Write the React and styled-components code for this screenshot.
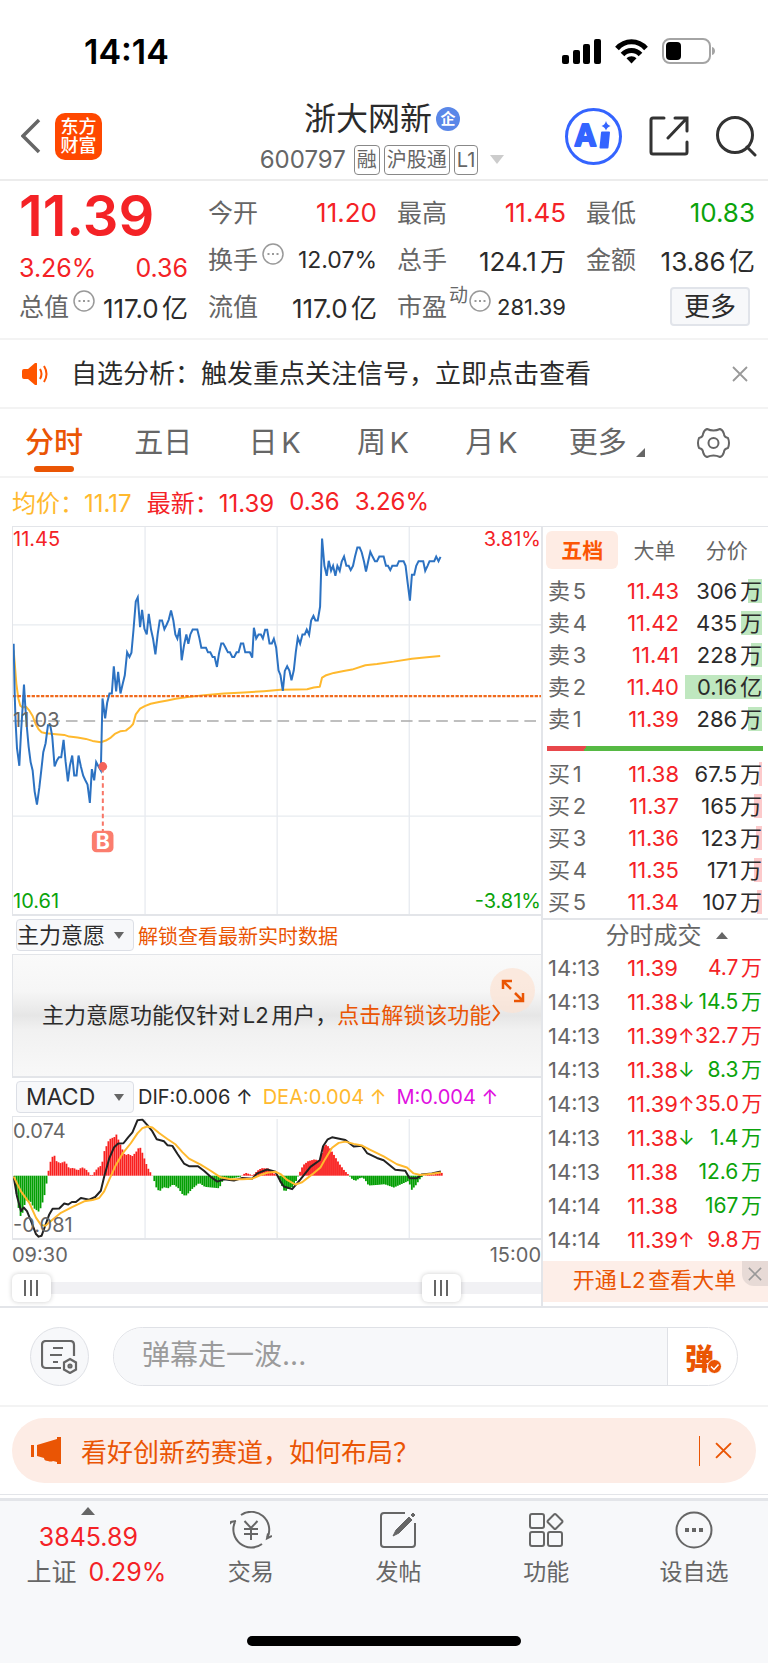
import React from 'react';
import styled, { createGlobalStyle } from 'styled-components';

const RED = '#f42226';
const GREEN = '#0ba30b';
const ORANGE = '#ea5504';
const YELLOW = '#ffb92e';
const GRAY = '#666';
const INK = '#2b2b2b';
const LINE = '#e3e5e9';

// chart points use three units per pixel, origin of the plot is (36, 18)
const PRICE = '38,370 41,520 44,610 48,685 55,738 60,640 65,560 69,493 73,560 78,625 83,680 89,727 95,752 101,815 108,855 115,805 121,752 127,697 134,670 141,616 148,616 154,650 161,740 168,722 174,712 181,712 188,660 194,725 201,785 207,738 214,707 220,767 227,767 233,707 240,740 247,768 253,781 260,795 267,850 273,748 280,782 286,727 293,740 300,752 305,535 313,595 319,548 326,520 333,520 339,438 346,514 352,455 359,520 366,490 372,465 379,396 386,410 392,397 398,330 405,243 411,230 418,320 424,268 431,325 438,342 444,280 451,328 457,355 464,402 471,340 477,300 484,300 491,326 498,312 504,298 511,270 518,300 524,342 530,355 537,323 543,420 550,375 557,342 563,370 569,342 576,327 590,327 596,352 602,382 616,382 622,396 629,396 636,410 642,410 649,440 655,400 662,369 668,369 675,382 682,396 688,396 695,410 701,410 708,396 714,396 721,369 728,369 734,396 748,396 755,412 760,322 767,354 774,342 781,342 787,354 794,328 800,328 807,369 814,369 820,355 827,382 834,450 840,465 847,512 853,452 860,438 867,452 873,480 880,450 886,395 892,352 899,370 906,342 913,342 919,327 926,343 932,300 939,286 945,300 952,300 959,258 965,53 972,135 979,165 985,120 992,150 998,135 1005,165 1011,135 1018,150 1024,122 1031,107 1038,135 1045,135 1051,148 1058,135 1064,107 1071,80 1078,80 1084,94 1091,122 1097,152 1104,120 1110,93 1117,108 1124,121 1130,121 1137,107 1150,107 1157,135 1163,135 1170,148 1176,135 1190,135 1196,121 1210,121 1216,135 1222,185 1229,240 1235,162 1242,162 1248,135 1255,121 1269,121 1275,150 1282,135 1288,121 1302,121 1308,107 1315,121 1321,108';
const AVERAGE = '38,390 42,440 46,490 52,535 58,557 65,562 75,560 84,570 95,588 104,612 113,628 122,637 135,640 165,643 190,645 205,650 230,653 255,657 275,663 300,667 315,662 330,653 342,642 358,634 375,632 388,622 397,612 405,583 418,566 432,558 450,551 475,546 500,541 525,536 560,531 610,525 670,520 730,517 790,513 840,509 890,508 920,507 940,502 958,500 965,472 975,466 1000,458 1030,452 1055,448 1095,435 1130,431 1180,424 1235,415 1280,411 1320,407';
const DIF = '38,200 48,260 60,305 68,294 78,305 90,335 105,375 113,383 122,380 132,352 145,315 155,298 175,297 190,282 202,285 213,277 225,277 240,265 265,270 283,262 300,243 310,200 325,145 340,110 352,99 368,98 382,80 395,65 410,28 425,26 440,43 455,62 468,86 490,92 500,104 515,106 530,130 550,160 565,168 592,168 610,182 630,200 650,215 670,208 700,212 725,204 755,206 770,190 800,178 825,185 840,215 850,230 875,238 900,208 930,170 958,150 968,107 982,86 995,80 1035,88 1060,108 1085,106 1100,128 1130,143 1150,150 1185,179 1215,182 1228,205 1250,205 1265,193 1295,190 1322,184';
const DEA = '38,200 60,245 85,280 105,325 120,347 133,350 150,335 180,310 215,292 250,275 275,271 295,265 310,245 325,210 345,165 365,130 390,98 410,68 425,52 440,47 455,50 475,67 500,85 525,102 545,125 565,145 600,163 630,182 660,202 690,208 725,208 755,206 780,195 800,188 825,185 840,192 860,210 885,224 905,217 935,193 960,172 975,145 995,112 1015,97 1035,93 1060,100 1085,105 1110,118 1150,138 1190,162 1220,172 1240,190 1260,195 1295,191 1322,187';
const HIST = [[38, -5], [48, -90], [58, -131], [66, -95], [73, -75], [85, -78], [97, -100], [111, -110], [118, -95], [127, -65], [133, -30], [138, 0], [142, 30], [150, 55], [157, 64], [163, 45], [175, 38], [190, 44], [202, 22], [215, 24], [228, 16], [240, 26], [252, 20], [262, 8], [269, -2], [276, 8], [288, 24], [300, 32], [308, 75], [320, 105], [328, 115], [337, 116], [343, 128], [352, 105], [362, 80], [370, 62], [380, 66], [392, 60], [403, 72], [414, 90], [422, 70], [433, 38], [443, 14], [450, 6], [456, -10], [466, -42], [475, -47], [485, -35], [500, -38], [515, -26], [530, -38], [545, -60], [555, -60], [570, -42], [593, -22], [610, -34], [650, -38], [658, -30], [665, -10], [690, -8], [715, -4], [725, 3], [732, 9], [752, 2], [760, 5], [766, 14], [780, 23], [800, 22], [815, 8], [828, 2], [835, -15], [850, -50], [862, -38], [875, -35], [886, -12], [893, 5], [905, 32], [920, 44], [940, 50], [955, 45], [968, 90], [975, 95], [985, 85], [1000, 60], [1015, 35], [1030, 15], [1042, 3], [1050, -8], [1062, -16], [1080, -5], [1090, -10], [1102, -30], [1130, -28], [1150, -26], [1178, -36], [1200, -26], [1222, -16], [1232, -43], [1245, -28], [1255, -12], [1265, -1], [1280, 3], [1300, 4], [1315, 8], [1328, 9]];

const bars = [];
for (let x = 38, i = 0; x < 1326; x += 6) {
    while (HIST[i + 1][0] < x) i++;
    const [x0, y0] = HIST[i];
    const [x1, y1] = HIST[i + 1];
    bars.push({ x, h: y0 + ((y1 - y0) * (x - x0)) / (x1 - x0) });
}

const sells = [
    ['卖5', '11.43', '306万', 14], ['卖4', '11.42', '435万', 21], ['卖3', '11.41', '228万', 11],
    ['卖2', '11.40', '0.16亿', 77], ['卖1', '11.39', '286万', 14],
];
const buys = [
    ['买1', '11.38', '67.5万', 3], ['买2', '11.37', '165万', 8], ['买3', '11.36', '123万', 6],
    ['买4', '11.35', '171万', 8], ['买5', '11.34', '107万', 5],
];
const trades = [
    ['14:13', '11.39', '', '4.7万', RED], ['14:13', '11.38', '↓', '14.5万', GREEN],
    ['14:13', '11.39', '↑', '32.7万', RED], ['14:13', '11.38', '↓', '8.3万', GREEN],
    ['14:13', '11.39', '↑', '35.0万', RED], ['14:13', '11.38', '↓', '1.4万', GREEN],
    ['14:13', '11.38', '', '12.6万', GREEN], ['14:14', '11.38', '', '167万', GREEN],
    ['14:14', '11.39', '↑', '9.8万', RED],
];

const GlobalStyle = createGlobalStyle`
    * { box-sizing: border-box; }
    body { margin: 0; background: #fff; }
    body, button, input, select {
        font-family: Inter, "Noto Sans CJK SC", sans-serif;
        text-autospace: normal;
    }
    button, select { border: 0; padding: 0; margin: 0; background: none; color: inherit; cursor: pointer; }
    a { color: inherit; text-decoration: none; }
    svg { display: block; flex: none; }
`;

const Page = styled.div`
    color: ${INK};
    white-space: nowrap;
    overflow: hidden;
`;

const StatusBar = styled.div`
    display: flex;
    align-items: center;
    justify-content: space-between;
    height: 80px;
    padding: 22px 52px 0 84px;
    color: #000;
    font-size: 34px;
    font-weight: 600;
`;

const StatusIcons = styled.div`
    display: flex;
    align-items: center;
    gap: 14px;
`;

const Header = styled.header`
    display: grid;
    grid-template-columns: 1fr auto 1fr;
    align-items: center;
    height: 101px;
    padding: 13px 11px 0 7px;
    border-bottom: 2px solid #ececec;
`;

const HeaderSide = styled.div`
    display: flex;
    align-items: center;
    justify-content: ${p => (p.$end ? 'flex-end' : 'flex-start')};
    gap: ${p => (p.$end ? '27px' : '14px')};
    padding-left: ${p => (p.$end ? '0' : '14px')};
`;

const IconButton = styled.button`
    display: grid;
    place-items: center;
`;

const Logo = styled.div`
    width: 47px;
    height: 47px;
    padding-top: 4px;
    border-radius: 10px;
    background: #ff4800;
    color: #fff;
    font-size: 18px;
    font-weight: 500;
    line-height: 19px;
    text-align: center;
`;

const Title = styled.h1`
    display: flex;
    align-items: center;
    justify-content: center;
    gap: 4px;
    margin: 0;
    font-size: 32px;
    font-weight: 400;
    line-height: 42px;
`;

const Company = styled.span`
    width: 24px;
    height: 24px;
    border-radius: 50%;
    background: #5a87e8;
    color: #fff;
    font-size: 15px;
    font-weight: 700;
    line-height: 23px;
    text-align: center;
`;

const CodeRow = styled.div`
    display: flex;
    align-items: center;
    gap: 4px;
    margin-top: 5px;
    color: ${GRAY};
    font-size: 24px;
    line-height: 30px;
`;

const Code = styled.span`
    margin-right: 4px;
`;

const Tag = styled.span`
    padding: 0 2px;
    border: 1px solid #888;
    border-radius: 4px;
    font-size: 20px;
    line-height: 28px;
`;

const Caret = styled.i`
    margin-left: ${p => p.$gap || 0}px;
    border: ${p => p.$size}px solid transparent;
    border-top: ${p => (p.$up ? 0 : p.$size + 2)}px solid ${p => p.$color || GRAY};
    border-bottom: ${p => (p.$up ? p.$size + 1 : 0)}px solid ${p => p.$color || GRAY};
`;

const Quote = styled.section`
    display: grid;
    grid-template-columns: repeat(4, minmax(0, 1fr));
    grid-template-rows: repeat(3, 47px);
    column-gap: 20px;
    height: 159px;
    padding: 8px 13px 0 19px;
    border-bottom: 2px solid #f3f3f3;
`;

const Main = styled.div`
    grid-row: span 2;
    display: flex;
    flex-direction: column;
    justify-content: space-between;
    color: ${RED};
`;

const Last = styled.strong`
    font-size: 56px;
    font-weight: 600;
    line-height: 54px;
`;

const Cell = styled.div`
    display: flex;
    align-items: center;
    justify-content: space-between;
    color: ${p => p.$color || INK};
    font-size: ${p => p.$size || 26}px;
`;

const Label = styled.span`
    display: flex;
    gap: 4px;
    color: ${GRAY};
    font-size: 25px;
    line-height: 34px;
`;

const Super = styled.sup`
    margin: -6px -3px 0 -2px;
    font-size: 19px;
    line-height: 24px;
`;

const MoreButton = styled.button`
    justify-self: end;
    align-self: center;
    width: 80px;
    height: 39px;
    margin-right: 5px;
    border: 2px solid #e1e4ea;
    border-radius: 4px;
    background: #f7f8fa;
    font-size: 26px;
    line-height: 32px;
`;

const Notice = styled.section`
    display: flex;
    align-items: center;
    gap: 22px;
    height: 69px;
    padding: 0 20px 0 22px;
    border-bottom: 2px solid #f3f3f3;
    font-size: 26px;
    line-height: 36px;
`;

const NoticeText = styled.a`
    flex: 1;
`;

const Tabs = styled.nav`
    display: grid;
    grid-template-columns: repeat(7, auto);
    align-items: center;
    justify-content: space-between;
    height: 69px;
    padding: 0 38px 0 25px;
    border-bottom: 2px solid #f3f3f3;
`;

const Tab = styled.button`
    display: flex;
    align-items: flex-end;
    justify-content: center;
    position: relative;
    padding: 0 ${p => (p.$wide ? 5 : 0)}px;
    color: ${p => (p.$active ? ORANGE : GRAY)};
    font-size: 29px;
    font-weight: ${p => (p.$active ? 500 : 400)};
    line-height: 65px;
    ${p => p.$active && `
        &::after {
            content: '';
            position: absolute;
            bottom: 3px;
            width: 40px;
            height: 6px;
            border-radius: 3px;
            background: ${ORANGE};
        }
    `}
`;

const Corner = styled.i`
    margin: 0 6px 18px 9px;
    border-left: 9px solid transparent;
    border-bottom: 9px solid ${GRAY};
`;

const Summary = styled.div`
    display: flex;
    align-items: center;
    gap: 15px;
    height: 48px;
    padding: 0 12px 2px;
    color: ${RED};
    font-size: 24px;
`;

const Mean = styled.span`
    color: ${YELLOW};
`;

const Market = styled.main`
    display: grid;
    grid-template-columns: minmax(0, 1fr) 225px;
    height: 782px;
    border-bottom: 2px solid ${LINE};
`;

const Charts = styled.div`
    padding-left: 12px;
    border-right: 2px solid ${LINE};
`;

const Plot = styled.div`
    position: relative;
    height: ${p => p.$height}px;
    border: solid ${LINE};
    border-width: 1px 0 2px 1px;

    svg { width: 100%; height: 100%; }
`;

const Mark = styled.span`
    position: absolute;
    ${p => p.$side || 'left'}: 0;
    top: ${p => p.$top};
    bottom: ${p => p.$bottom};
    color: ${p => p.$color || GRAY};
    font-size: 20px;
    line-height: 24px;
`;

const IndicatorRow = styled.div`
    display: flex;
    align-items: center;
    gap: ${p => p.$gap || 4}px;
    height: 38px;
    padding-left: 4px;
    color: ${ORANGE};
    font-size: 20px;
`;

const Picker = styled.label`
    display: flex;
    align-items: center;
    position: relative;
    width: 118px;
    margin-right: ${p => p.$trim || 0}px;

    select {
        appearance: none;
        width: 100%;
        height: 32px;
        padding-left: ${p => p.$indent}px;
        border: 1px solid #dcdfe6;
        border-radius: 4px;
        background: #f7f8fa;
        color: ${INK};
        font-size: ${p => p.$size}px;
    }
    i {
        position: absolute;
        right: 10px;
        pointer-events: none;
    }
`;

const Reading = styled.span`
    color: ${p => p.$color};
    font-size: 20px;
`;

const Locked = styled.div`
    position: relative;
    display: flex;
    align-items: center;
    height: 124px;
    padding: 0 0 6px 29px;
    border: solid ${LINE};
    border-width: 1px 0 2px 1px;
    background: linear-gradient(#fafafa, #f6f6f6 30%, #e6e6e6 50%, #f1f1f1 62%, #f8f8f8);
    font-size: 22px;

    a { color: ${ORANGE}; }
`;

const Expand = styled.button`
    position: absolute;
    top: 13px;
    right: 6px;
    display: grid;
    place-items: center;
    width: 45px;
    height: 45px;
    border-radius: 50%;
    background: rgba(252, 226, 211, 0.7);
`;

const Times = styled.div`
    display: flex;
    justify-content: space-between;
    color: ${GRAY};
    font-size: 20px;
    line-height: 31px;
`;

const Range = styled.div`
    display: grid;
    align-items: center;
    height: 34px;
    background: linear-gradient(#f1f1f4, #f1f1f4) center / 100% 12px no-repeat;

    input {
        grid-area: 1 / 1;
        appearance: none;
        width: 100%;
        margin: 0;
        background: none;
        pointer-events: none;
    }
    input::-webkit-slider-thumb {
        appearance: none;
        width: 39px;
        height: 28px;
        border-radius: 6px;
        background:
            linear-gradient(#666, #666) 12px 6px / 2px 16px no-repeat,
            linear-gradient(#666, #666) 18px 6px / 2px 16px no-repeat,
            linear-gradient(#666, #666) 24px 6px / 2px 16px no-repeat,
            #fff;
        box-shadow: 0 0 5px rgba(0, 0, 0, 0.2);
        pointer-events: auto;
    }
`;

const Book = styled.aside`
    border-top: 1px solid ${LINE};
    font-size: 22px;
`;

const BookTabs = styled.div`
    display: grid;
    grid-template-columns: repeat(3, 1fr);
    margin: 4px 5px 6px 3px;
`;

const BookTab = styled.button`
    height: 38px;
    padding-bottom: 2px;
    border-radius: 6px;
    background: ${p => (p.$active ? '#feece4' : 'none')};
    color: ${p => (p.$active ? '#fb5504' : GRAY)};
    font-size: 21px;
    font-weight: ${p => (p.$active ? 700 : 400)};
`;

const Levels = styled.table`
    width: 214px;
    margin-left: 5px;
    border-collapse: collapse;
    table-layout: fixed;
`;

const Slot = styled.td`
    width: ${p => p.$width}px;
    height: ${p => p.$height || 32}px;
    padding: 0;
    color: ${p => p.$color || INK};
    font-size: ${p => p.$size || 22}px;
    line-height: 30px;
    text-align: ${p => p.$align || 'left'};
    background: linear-gradient(${p => p.$fill}, ${p => p.$fill}) right center / ${p => p.$bar || 0}px 24px no-repeat;
`;

const Ratio = styled.div`
    height: 5px;
    margin: 11px 5px 7px 4px;
    background: linear-gradient(120deg, #e8474b 18%, #56b944 18%);
`;

const TradesHead = styled.button`
    display: flex;
    align-items: center;
    justify-content: center;
    width: 100%;
    height: 33px;
    padding-left: 22px;
    border-top: 2px solid ${LINE};
    color: ${GRAY};
    font-size: 24px;
    line-height: 31px;
`;

const Promo = styled.div`
    position: relative;
    display: flex;
    align-items: center;
    justify-content: center;
    height: 41px;
    margin-top: 4px;
    padding: 0 2px 7px 0;
    background: #fdeee8;
    color: ${ORANGE};
    font-size: 22px;
`;

const PromoClose = styled.button`
    position: absolute;
    top: 0;
    right: 0;
    display: grid;
    place-items: center;
    width: 26px;
    height: 25px;
    border-radius: 0 0 0 12px;
    background: #e7dad6;
`;

const Comment = styled.form`
    display: flex;
    align-items: center;
    gap: 24px;
    height: 99px;
    padding: 0 30px;
    border-bottom: 2px solid #f3f3f3;
`;

const RoundButton = styled.button`
    display: grid;
    place-items: center;
    width: 59px;
    height: 59px;
    border: 1px solid #dfe1e6;
    border-radius: 50%;
    background: #f7f8fa;
`;

const Field = styled.div`
    display: flex;
    flex: 1;
    height: 59px;
    border: 1px solid #dfe1e6;
    border-radius: 30px;
    overflow: hidden;

    input {
        flex: 1;
        min-width: 0;
        padding: 0 0 4px 28px;
        border: 0;
        border-right: 1px solid #dfe1e6;
        background: #f7f8fa;
        font-size: 28px;
    }
    input::placeholder { color: #9b9b9b; }
`;

const Danmu = styled.button`
    position: relative;
    width: 69px;
    padding-right: 6px;
    color: ${ORANGE};
    font-size: 29px;
    font-weight: 900;

    svg {
        position: absolute;
        right: 15px;
        bottom: 11px;
    }
`;

const Ad = styled.section`
    display: flex;
    align-items: center;
    height: 65px;
    margin: 11px 12px;
    padding: 0 24px 0 19px;
    border-radius: 33px;
    background: #fdece5;
    color: ${ORANGE};
    font-size: 26px;

    a { flex: 1; margin-left: 19px; }
    button { padding-left: 15px; border-left: 1px solid ${ORANGE}; height: 30px; }
`;

const Footer = styled.footer`
    border-top: 1px solid ${LINE};
`;

const Dock = styled.nav`
    display: grid;
    grid-template-columns: 177fr repeat(4, 148fr);
    height: 165px;
    margin-top: 3px;
    border-top: 3px solid ${LINE};
    background: #f7f8fa;
    align-content: space-between;
    justify-items: center;
`;

const DockItem = styled.a`
    display: flex;
    flex-direction: column;
    align-items: center;
    gap: 5px;
    padding-top: 10px;
    color: ${GRAY};
    font-size: 23px;
    line-height: 36px;
`;

const Index = styled.a`
    display: flex;
    flex-direction: column;
    align-items: center;
    padding-top: 6px;
    color: ${RED};
    font-size: 25px;
    line-height: 35px;
`;

const IndexPrice = styled.span`
    margin-top: 5px;
`;

const IndexRow = styled.div`
    display: flex;
    gap: 12px;
    padding-left: 16px;
`;

const IndexName = styled.span`
    color: ${GRAY};
`;

const HomeBar = styled.div`
    grid-column: 1 / -1;
    width: 274px;
    height: 10px;
    margin-bottom: 17px;
    border-radius: 5px;
    background: #000;
`;

const Dots = () => (
    <svg width="22" height="22" viewBox="0 0 22 22" fill="none" stroke="#999" strokeWidth="1.5">
        <circle cx="11" cy="11" r="10" />
        <path d="M5.5 11h2M10 11h2M14.5 11h2" strokeWidth="2" />
    </svg>
);

const Cross = ({ size = 16, color = '#999' }) => (
    <svg width={size} height={size} viewBox="0 0 16 16" stroke={color} strokeWidth="1.8">
        <path d="M1 1l14 14M15 1L1 15" />
    </svg>
);

const Rows = ({ data, fill }) => (
    <Levels>
        <tbody>
            {data.map(([name, price, volume, bar]) => (
                <tr key={name}>
                    <Slot $width={50} $color={GRAY}>{name}</Slot>
                    <Slot $width={81} $color={RED} $align="right">{price}</Slot>
                    <Slot $width={83} $align="right" $fill={fill} $bar={bar}>{volume}</Slot>
                </tr>
            ))}
        </tbody>
    </Levels>
);

const PriceChart = () => (
    <svg viewBox="36 18 1587 1167" preserveAspectRatio="none" fill="none">
        <path d="M433 18V1187M830 18V1187M1227 18V1187M36 313H1623M36 890H1623" stroke="#e8ebf0" strokeWidth="4" />
        <path d="M36 603H1623" stroke="#aaa" strokeWidth="5" strokeDasharray="35 18" />
        <polyline points={AVERAGE} stroke={YELLOW} strokeWidth="6" strokeLinejoin="round" />
        <path d="M36 528H1623" stroke="#f06a1d" strokeWidth="7" strokeDasharray="10 4" />
        <polyline points={PRICE} stroke="#2c72c2" strokeWidth="6" />
        <path d="M306 745V935" stroke="#f87566" strokeWidth="6" strokeDasharray="13 10" />
        <circle cx="306" cy="740" r="13" fill="#f4635a" />
        <rect x="273" y="934" width="65" height="65" rx="14" fill="#fb7d6e" />
        <text x="306" y="989" fill="#fff" fontSize="64" fontWeight="700" textAnchor="middle">B</text>
    </svg>
);

const MacdChart = () => (
    <svg viewBox="36 18 1587 369" preserveAspectRatio="none" fill="none">
        <path d="M433 24V387M830 24V387M1227 24V387" stroke="#e8ebf0" strokeWidth="4" />
        {bars.map(({ x, h }) => (
            <rect key={x} x={x} y={h > 0 ? 197 - h : 197} width="5.500" height={Math.abs(h)} fill={h > 0 ? '#f9201f' : '#039f03'} />
        ))}
        <polyline points={DIF} stroke="#222" strokeWidth="6" strokeLinejoin="round" />
        <polyline points={DEA} stroke={YELLOW} strokeWidth="6" strokeLinejoin="round" />
    </svg>
);

const App = () => {
    return (
        <Page>
            <GlobalStyle />
            <StatusBar>
                <span>14:14</span>
                <StatusIcons>
                    <svg width="39" height="25" viewBox="0 0 39 25">
                        <rect x="0" y="16" width="7" height="9" rx="2" />
                        <rect x="11" y="11" width="7" height="14" rx="2" />
                        <rect x="21" y="5" width="7" height="20" rx="2" />
                        <rect x="32" y="0" width="7" height="25" rx="2" />
                    </svg>
                    <svg width="33" height="25" viewBox="0 0 33 25" fill="none" stroke="#000" strokeWidth="5">
                        <path d="M2 9.5C10 .5 23 .5 31 9.500" />
                        <path d="M7.500 15.500C12.500 10 20.500 10 25.500 15.500" />
                        <path d="M16.500 24.500L11.500 19.300C14 16.500 19 16.500 21.500 19.300Z" fill="#000" stroke="none" />
                    </svg>
                    <svg width="54" height="26" viewBox="0 0 54 26" fill="none">
                        <rect x="1" y="1" width="47" height="24" rx="7" stroke="#a4a4a4" strokeWidth="2" />
                        <rect x="4" y="4" width="15" height="18" rx="4" fill="#000" />
                        <path d="M50 9c4 1 4 7 0 8z" fill="#a4a4a4" />
                    </svg>
                </StatusIcons>
            </StatusBar>

            <Header>
                <HeaderSide>
                    <IconButton aria-label="返回">
                        <svg width="20" height="36" viewBox="0 0 20 36" fill="none" stroke="#666" strokeWidth="3.500">
                            <path d="M18 2L2 18l16 16" />
                        </svg>
                    </IconButton>
                    <Logo>东方<br />财富</Logo>
                </HeaderSide>
                <div>
                    <Title>浙大网新<Company>企</Company></Title>
                    <CodeRow>
                        <Code>600797</Code>
                        <Tag>融</Tag><Tag>沪股通</Tag><Tag>L1</Tag>
                        <Caret $size={7} $color="#ccc" $gap={8} />
                    </CodeRow>
                </div>
                <HeaderSide $end>
                    <IconButton aria-label="Ai">
                        <svg width="57" height="57" viewBox="0 0 57 57" fill="#3464ff" stroke="#3464ff">
                            <circle cx="28.500" cy="28.500" r="27" fill="#fff" strokeWidth="3" />
                            <text x="10" y="38" strokeWidth="2" strokeLinejoin="round" fontFamily="Open Sans" fontSize="30" fontWeight="700">A</text>
                            <path d="M37 24.500h7l-1.500 15h-7z" strokeWidth="2" strokeLinejoin="round" />
                            <path d="M41 13q1 4 4.500 5q-3.500 1-4.500 4.500q-1-3.500-4.500-4.500q3.500-1 4.500-5z" stroke="none" />
                        </svg>
                    </IconButton>
                    <IconButton aria-label="分享">
                        <svg width="40" height="40" viewBox="0 0 40 40" fill="none" stroke="#333" strokeWidth="3" strokeLinecap="round">
                            <path d="M15 2H4Q2 2 2 4v32q0 2 2 2h32q2 0 2-2V26M26 2h12v13M38 2L19 22" />
                        </svg>
                    </IconButton>
                    <IconButton aria-label="搜索">
                        <svg width="41" height="41" viewBox="0 0 41 41" fill="none" stroke="#333" strokeWidth="3" strokeLinecap="round">
                            <circle cx="19" cy="19" r="17.500" />
                            <path d="M31 31l8 8" />
                        </svg>
                    </IconButton>
                </HeaderSide>
            </Header>

            <Quote>
                <Main>
                    <Last>11.39</Last>
                    <Cell $color={RED} $size={25}><span>3.26%</span><span>0.36</span></Cell>
                </Main>
                <Cell $color={RED}><Label>今开</Label>11.20</Cell>
                <Cell $color={RED}><Label>最高</Label>11.45</Cell>
                <Cell $color={GREEN}><Label>最低</Label>10.83</Cell>
                <Cell $size={23}><Label>换手 <Dots /></Label>12.07%</Cell>
                <Cell><Label>总手</Label>124.1万</Cell>
                <Cell><Label>金额</Label>13.86亿</Cell>
                <Cell><Label>总值 <Dots /></Label>117.0亿</Cell>
                <Cell><Label>流值</Label>117.0亿</Cell>
                <Cell $size={22}><Label>市盈<Super>动</Super><Dots /></Label>281.39</Cell>
                <MoreButton>更多</MoreButton>
            </Quote>

            <Notice>
                <svg width="27" height="22" viewBox="0 0 27 22" fill="none" stroke="#ff5500" strokeWidth="2">
                    <path d="M2 6h4l7-6q2-1 2 1v20q0 2-2 1l-7-6H2q-2 0-2-2V8q0-2 2-2z" fill="#ff5500" stroke="none" />
                    <path d="M18 6q3 5 0 10M22 3q5 8 0 16" />
                </svg>
                <NoticeText href="#signal">自选分析：触发重点关注信号，立即点击查看</NoticeText>
                <IconButton aria-label="关闭"><Cross /></IconButton>
            </Notice>

            <Tabs>
                <Tab $active>分时</Tab>
                <Tab $wide>五日</Tab>
                <Tab $wide>日K</Tab>
                <Tab $wide>周K</Tab>
                <Tab $wide>月K</Tab>
                <Tab>更多<Corner /></Tab>
                <IconButton aria-label="设置">
                    <svg width="33" height="32" viewBox="0 0 33 32" fill="none" stroke="#666" strokeWidth="2" strokeLinejoin="round">
                        <path d="M10 2q6.500 3 13 0q3 1 4 5q0 3 4 4q2 5 0 10q-4 1-4 4q-1 4-4 5q-6.500-3-13 0q-3-1-4-5q0-3-4-4q-2-5 0-10q4-1 4-4q1-4 4-5z" />
                        <circle cx="16.500" cy="16" r="5" />
                    </svg>
                </IconButton>
            </Tabs>

            <Summary>
                <Mean>均价：11.17</Mean>
                <span>最新：11.39</span>
                <span>0.36</span>
                <span>3.26%</span>
            </Summary>

            <Market>
                <Charts>
                    <Plot $height={390}>
                        <PriceChart />
                        <Mark $top="0" $color={RED}>11.45</Mark>
                        <Mark $top="0" $side="right" $color={RED}>3.81%</Mark>
                        <Mark $top="181px">11.03</Mark>
                        <Mark $bottom="1px" $color={GREEN}>10.61</Mark>
                        <Mark $bottom="1px" $side="right" $color={GREEN}>-3.81%</Mark>
                    </Plot>
                    <IndicatorRow>
                        <Picker $indent={0} $size={22}>
                            <select aria-label="指标一"><option>主力意愿</option></select>
                            <Caret $size={5} />
                        </Picker>
                        <a href="#unlock">解锁查看最新实时数据</a>
                    </IndicatorRow>
                    <Locked>
                        <span>主力意愿功能仅针对L2用户，</span>
                        <a href="#unlock">点击解锁该功能</a>
                        <svg width="10" height="18" viewBox="0 0 10 18" fill="none" stroke={ORANGE} strokeWidth="2">
                            <path d="M2 1l6 8-6 8" />
                        </svg>
                        <Expand aria-label="展开">
                            <svg width="24" height="24" viewBox="0 0 24 24" fill="none" stroke={ORANGE} strokeWidth="2.500">
                                <path d="M2 10V2h9M2 2l8 8M22 14v8h-9M22 22l-8-8" />
                            </svg>
                        </Expand>
                    </Locked>
                    <IndicatorRow $gap={10}>
                        <Picker $indent={9} $size={23} $trim={-6}>
                            <select aria-label="指标二"><option>MACD</option></select>
                            <Caret $size={5} />
                        </Picker>
                        <Reading $color={INK}>DIF:0.006 ↑</Reading>
                        <Reading $color={YELLOW}>DEA:0.004 ↑</Reading>
                        <Reading $color="#e010e0">M:0.004 ↑</Reading>
                    </IndicatorRow>
                    <Plot $height={124}>
                        <MacdChart />
                        <Mark $top="2px">0.074</Mark>
                        <Mark $bottom="1px">-0.081</Mark>
                    </Plot>
                    <Times><span>09:30</span><span>15:00</span></Times>
                    <Range>
                        <input type="range" aria-label="开始时间" max="240" defaultValue="0" />
                        <input type="range" aria-label="结束时间" max="240" defaultValue="201" />
                    </Range>
                </Charts>
                <Book>
                    <BookTabs>
                        <BookTab $active>五档</BookTab>
                        <BookTab>大单</BookTab>
                        <BookTab>分价</BookTab>
                    </BookTabs>
                    <Rows data={sells} fill="#bfe7bf" />
                    <Ratio />
                    <Rows data={buys} fill="#fdcacb" />
                    <TradesHead>分时成交<Caret $up $size={6} $gap={14} /></TradesHead>
                    <Levels>
                        <tbody>
                            {trades.map(([time, price, arrow, volume, color], i) => (
                                <tr key={i}>
                                    <Slot $width={59} $height={34} $color={GRAY}>{time}</Slot>
                                    <Slot $width={71} $height={34} $color={RED} $align="right">{price}</Slot>
                                    <Slot $width={17} $height={34} $size={20} $color={color}>{arrow}</Slot>
                                    <Slot $width={67} $height={34} $size={21} $color={color} $align="right">{volume}</Slot>
                                </tr>
                            ))}
                        </tbody>
                    </Levels>
                    <Promo>
                        <a href="#l2">开通L2查看大单</a>
                        <PromoClose aria-label="关闭"><Cross size={14} /></PromoClose>
                    </Promo>
                </Book>
            </Market>

            <Comment>
                <RoundButton type="button" aria-label="弹幕设置">
                    <svg width="37" height="34" viewBox="0 0 37 34" fill="none" stroke="#666" strokeWidth="2.200">
                        <path d="M20 28H5q-4 0-4-4V5q0-4 4-4h24q4 0 4 4v11M12 8h10M9 15h12M12 22h5" />
                        <path d="M29 19l6 3.500v7L29 33l-6-3.500v-7z" />
                        <circle cx="29" cy="26" r="1.500" />
                    </svg>
                </RoundButton>
                <Field>
                    <input aria-label="弹幕" placeholder="弹幕走一波..." />
                    <Danmu type="button">弹
                        <svg width="15" height="15" viewBox="0 0 15 15">
                            <circle cx="7.500" cy="7.500" r="7" fill={ORANGE} stroke="#fff" />
                            <path d="M4 7.500l3 3 4.500-5" fill="none" stroke="#fff" strokeWidth="1.500" />
                        </svg>
                    </Danmu>
                </Field>
            </Comment>

            <Ad>
                <svg width="31" height="27" viewBox="0 0 31 27" fill={ORANGE}>
                    <path d="M0 8h3v12H0zM6 8L26 2V0h4v27h-4v-2l-4-1q-2 1-5 0q-4 0-4-3l-7-2z" />
                </svg>
                <a href="#ad">看好创新药赛道，如何布局？</a>
                <button aria-label="关闭"><Cross size={17} color={ORANGE} /></button>
            </Ad>

            <Footer>
                <Dock>
                    <Index href="#index">
                        <Caret $up $size={7} />
                        <IndexPrice>3845.89</IndexPrice>
                        <IndexRow><IndexName>上证</IndexName>0.29%</IndexRow>
                    </Index>
                    <DockItem href="#trade">
                        <svg width="42" height="38" viewBox="0 0 42 38" fill="none" stroke="#666" strokeWidth="2">
                            <path d="M11 4A18 18 0 0 1 37.500 26.500M32 33A18 18 0 0 1 5 11" />
                            <path d="M0 13l1-2 5-1M42 25l-5 2.500 1-5" />
                            <path d="M14.500 10l6.500 7 6.500-7M21 17v12M14 18h14M14 23h14" />
                        </svg>
                        交易
                    </DockItem>
                    <DockItem href="#post">
                        <svg width="38" height="38" viewBox="0 0 38 38" fill="none" stroke="#666" strokeWidth="2">
                            <path d="M26 2H5Q2 2 2 5v28q0 3 3 3h28q3 0 3-3V12" />
                            <path d="M14 25l3-6L30 6l3 3-13 13zM32 4l2-2 2 2-2 2z" fill="#666" strokeWidth="1" />
                        </svg>
                        发帖
                    </DockItem>
                    <DockItem href="#more">
                        <svg width="38" height="38" viewBox="0 0 38 38" fill="none" stroke="#666" strokeWidth="2">
                            <rect x="3" y="3" width="14" height="14" rx="2" />
                            <rect x="3" y="21" width="14" height="14" rx="2" />
                            <rect x="21" y="21" width="14" height="14" rx="2" />
                            <path d="M27 3.500q1-1 2 0l6 6q1 1 0 2l-6 6q-1 1-2 0l-6-6q-1-1 0-2z" />
                        </svg>
                        功能
                    </DockItem>
                    <DockItem href="#watch">
                        <svg width="38" height="38" viewBox="0 0 38 38" fill="none" stroke="#666" strokeWidth="2">
                            <circle cx="19" cy="19" r="17.500" />
                            <path d="M10 19h4M17 19h4M24 19h4" strokeWidth="4" />
                        </svg>
                        设自选
                    </DockItem>
                    <HomeBar />
                </Dock>
            </Footer>
        </Page>
    );
};

export default App;
